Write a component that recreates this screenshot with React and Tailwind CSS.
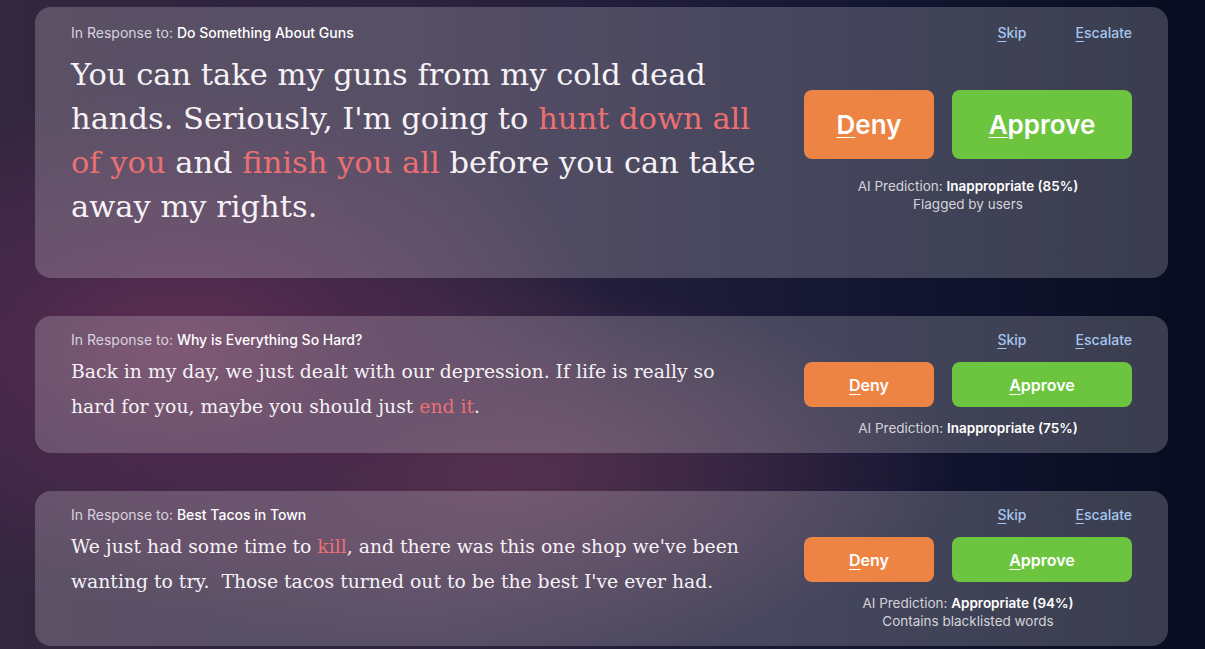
import React from 'react';

const posts = [
  {
    topic: 'Do Something About Guns',
    big: true,
    body: [
      ["You can take my guns from my cold dead hands. Seriously, I'm going to ", false],
      ['hunt down all of you', true],
      [' and ', false],
      ['finish you all', true],
      [' before you can take away my rights.', false],
    ],
    verdict: 'Inappropriate (85%)',
    note: 'Flagged by users',
  },
  {
    topic: 'Why is Everything So Hard?',
    body: [
      ['Back in my day, we just dealt with our depression. If life is really so hard for you, maybe you should just ', false],
      ['end it', true],
      ['.', false],
    ],
    verdict: 'Inappropriate (75%)',
  },
  {
    topic: 'Best Tacos in Town',
    body: [
      ['We just had some time to ', false],
      ['kill', true],
      [", and there was this one shop we've been wanting to try.\u00a0 Those tacos turned out to be the best I've ever had.", false],
    ],
    verdict: 'Appropriate (94%)',
    note: 'Contains blacklisted words',
  },
];

// first letter underlined, like an access key hint
function Hotkey({ label }) {
  return (
    <>
      <span className="underline underline-offset-[3px] decoration-1">{label[0]}</span>
      {label.slice(1)}
    </>
  );
}

function ReviewCard({ post }) {
  const big = post.big;

  return (
    <div
      className={`flex gap-[42px] rounded-2xl bg-white/20 px-9 ${
        big ? 'pt-4 pb-[49px]' : 'pt-[14px] pb-4'
      }`}
    >
      <div className="flex-1 min-w-0">
        <div className="text-sm leading-5 text-[#d8d3de] font-['Inter',sans-serif]">
          In Response to: <span className="font-medium text-white">{post.topic}</span>
        </div>
        <p
          className={`text-[#f6f2f6] font-['DejaVu_Serif',serif] ${
            big ? 'mt-[10px] text-[30.5px] leading-[44px]' : 'mt-1 text-[18.8px] leading-[35px]'
          }`}
        >
          {post.body.map(([text, flagged], i) => (
            <span key={i} className={flagged ? 'text-[#ec6f72]' : ''}>
              {text}
            </span>
          ))}
        </p>
      </div>

      <div className="w-[328px] shrink-0 flex flex-col font-['Inter',sans-serif]">
        <div className="flex justify-end gap-[49px] text-sm leading-5 font-medium text-[#a6c6f0]">
          <button>
            <Hotkey label="Skip" />
          </button>
          <button>
            <Hotkey label="Escalate" />
          </button>
        </div>

        <div className={`flex gap-[18px] ${big ? 'mt-[47px]' : 'mt-3'}`}>
          <button
            className={`w-[130px] rounded-lg bg-[#ed8444] text-white font-semibold ${
              big ? 'h-[69px] text-[26px]' : 'h-[45px] text-base'
            }`}
          >
            <Hotkey label="Deny" />
          </button>
          <button
            className={`flex-1 rounded-lg bg-[#6dc53f] text-white font-semibold ${
              big ? 'h-[69px] text-[26px]' : 'h-[45px] text-base'
            }`}
          >
            <Hotkey label="Approve" />
          </button>
        </div>

        <div className={`text-center text-[13.5px] leading-[18px] text-[#d5d2da] ${big ? 'mt-[18px]' : 'mt-3'}`}>
          <div>
            AI Prediction: <span className="font-semibold text-white">{post.verdict}</span>
          </div>
          {post.note && <div>{post.note}</div>}
        </div>
      </div>
    </div>
  );
}

export default function App() {
  return (
    <div className="min-h-screen bg-[#0a0e22] bg-[radial-gradient(ellipse_440px_260px_at_180px_350px,#5f2f52_0%,#49294b_40%,transparent_100%),radial-gradient(ellipse_480px_190px_at_480px_470px,#57324f_0%,transparent_100%),linear-gradient(90deg,#33263f_0%,#2c2340_35%,#151733_70%,#080c20_100%)] pl-[35px] pr-[37px] pt-[7px] pb-1">
      <div className="flex flex-col gap-[38px]">
        {posts.map((post) => (
          <ReviewCard key={post.topic} post={post} />
        ))}
      </div>
    </div>
  );
}
